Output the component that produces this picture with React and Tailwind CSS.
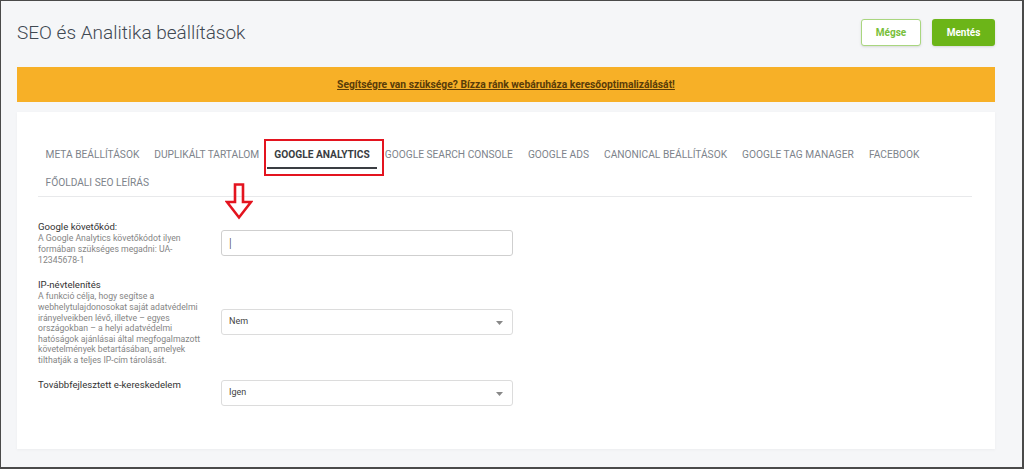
import React from "react";

const tabs = [
  "Meta beállítások",
  "Duplikált tartalom",
  "Google Analytics",
  "Google Search Console",
  "Google Ads",
  "Canonical beállítások",
  "Google Tag Manager",
  "Facebook",
  "Főoldali SEO leírás",
];

const Caret = () => (
  <svg width="7" height="4" viewBox="0 0 7 4" className="absolute right-[9px] top-[11px]">
    <path d="M0 0 L7 0 L3.5 4 Z" fill="#888" />
  </svg>
);

const SelectBox = ({ value, className = "" }) => (
  <div className={"relative w-[292px] h-[26px] border border-[#dcdcdc] rounded-[3px] bg-white flex items-center px-[7px] text-[9px] text-[#444] " + className}>
    {value}
    <Caret />
  </div>
);

const App = () => {
  return (
    <div className="w-[1024px] h-[469px] overflow-hidden bg-[#f5f6f8] border-t border-l border-r-2 border-b-2 border-[#4a4a4a] font-['Roboto',sans-serif]">
      {/* Header */}
      <div className="flex items-center justify-between pl-[16px] pr-[27px] pt-[18px] h-[45px]">
        <h1 className="text-[19px] font-light text-[#3f4852] leading-none">
          SEO és Analitika beállítások
        </h1>
        <div className="flex gap-[11px]">
          <button className="w-[60px] h-[27px] rounded-[3px] bg-white border border-[#a9d67f] text-[#78c03a] text-[10px] font-bold shadow-sm">
            Mégse
          </button>
          <button className="w-[63px] h-[27px] rounded-[3px] bg-[#6cb518] text-white text-[10px] font-bold shadow-sm">
            Mentés
          </button>
        </div>
      </div>

      {/* Banner */}
      <div className="ml-[16px] mr-[27px] mt-[21px] h-[35px] bg-[#f7b027] flex items-center justify-center">
        <a href="#" className="text-[10.3px] font-bold text-[#5a3c08] underline">
          Segítségre van szüksége? Bízza ránk webáruháza keresőoptimalizálását!
        </a>
      </div>

      {/* Card */}
      <div className="ml-[16px] mr-[27px] mt-[10px] h-[337px] bg-white shadow-[0_1px_3px_rgba(0,0,0,0.04)] px-[21px] pt-[29px]">
        <div className="relative flex flex-wrap border-b border-[#e8e9eb] w-[934px]">
          {tabs.map((t, i) => (
            <div
              key={t}
              className={
                i === 2
                  ? "relative h-[28px] px-[7.5px] flex items-center uppercase text-[10.2px] font-bold text-[#3a3d42]"
                  : "h-[27px] px-[7.5px] flex items-center uppercase text-[10.2px] text-[#7d838b]"
              }
            >
              {t}
              {i === 2 && (
                <>
                  <span className="absolute left-0 right-0 bottom-[0px] h-[2px] bg-[#3a3d42]" />
                  <span className="absolute left-[-3px] right-[-7px] top-[-2px] bottom-[-7px] border-2 border-[#e3141f]" />
                </>
              )}
            </div>
          ))}
          {/* arrow annotation */}
          <svg
            width="28"
            height="37"
            viewBox="0 0 28 37"
            className="absolute left-[187px] top-[42px]"
          >
            <path
              d="M10 1.5 H18 V19 H26 L14 34.5 L2 19 H10 Z"
              fill="none"
              stroke="#e3141f"
              strokeWidth="2.6"
              strokeLinejoin="miter"
            />
          </svg>
        </div>

        {/* Form */}
        <div className="flex flex-col mt-[23px]">
          <div className="flex items-center gap-[13px]">
            <div className="w-[170px]">
              <div className="text-[9.6px] text-[#333] leading-[13px]">Google követőkód:</div>
              <p className="text-[8.7px] text-[#858585] leading-[10.8px]">
                A Google Analytics követőkódot ilyen formában szükséges megadni: UA-12345678-1
              </p>
            </div>
            <div className="w-[292px] h-[26px] border border-[#cfcfcf] rounded-[3px] bg-white flex items-center px-[7px] text-[12px] text-[#333] font-light">
              |
            </div>
          </div>

          <div className="flex items-center gap-[13px] mt-[13px]">
            <div className="w-[170px]">
              <div className="text-[9.6px] text-[#333] leading-[13px]">IP-névtelenítés</div>
              <p className="text-[8.7px] text-[#858585] leading-[10.6px]">
                A funkció célja, hogy segítse a webhelytulajdonosokat saját adatvédelmi irányelveikben lévő, illetve – egyes országokban – a helyi adatvédelmi hatóságok ajánlásai által megfogalmazott követelmények betartásában, amelyek tilthatják a teljes IP-cím tárolását.
              </p>
            </div>
            <SelectBox value="Nem" />
          </div>

          <div className="flex items-start gap-[13px] mt-[12px]">
            <div className="w-[170px]">
              <div className="text-[9.6px] text-[#333] leading-[13px]">Továbbfejlesztett e-kereskedelem</div>
            </div>
            <SelectBox value="Igen" className="mt-[2px]" />
          </div>
        </div>
      </div>
    </div>
  );
};

export default App;
